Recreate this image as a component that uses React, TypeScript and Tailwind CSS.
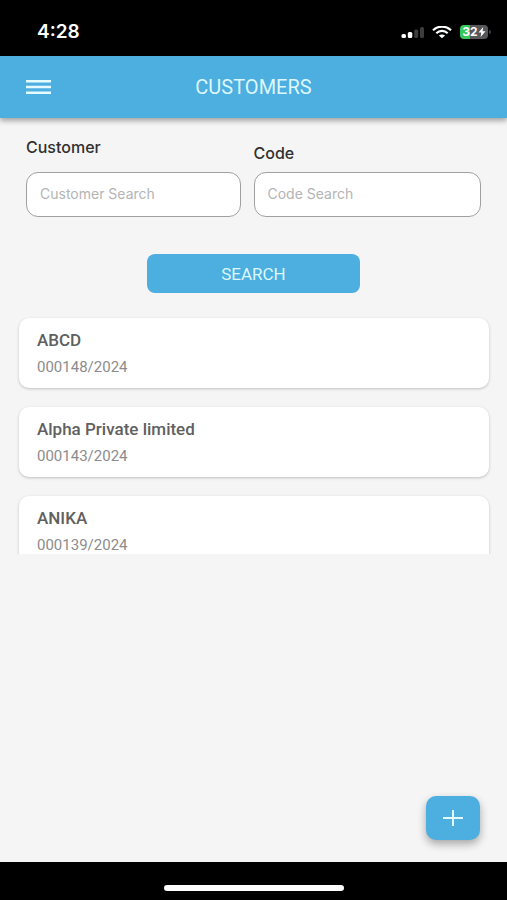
import React from "react";

type Customer = { name: string; code: string };

const customers: Customer[] = [
  { name: "ABCD", code: "000148/2024" },
  { name: "Alpha Private limited", code: "000143/2024" },
  { name: "ANIKA", code: "000139/2024" },
];

function StatusBar() {
  return (
    <div className="flex h-14 shrink-0 items-center justify-between bg-black pt-2 pr-4 pl-[37px] text-white">
      <span className="font-[Inter,sans-serif] text-[19px] leading-6 font-semibold">4:28</span>
      <div className="flex items-center gap-2">
        <svg width="24" height="13" viewBox="0 0 24 13" aria-hidden="true">
          <rect x="1.5" y="8" width="4.500" height="4" rx="1.500" fill="#fff" />
          <rect x="7.800" y="6" width="4.500" height="6" rx="1.500" fill="#fff" />
          <rect x="14.200" y="3.500" width="4" height="8.500" rx="1.500" fill="#3c3c3e" />
          <rect x="20" y="1" width="4" height="11" rx="1.500" fill="#3c3c3e" />
        </svg>
        <svg width="20" height="13" viewBox="0 0 20 13" fill="none" stroke="#fff" strokeWidth="2.200" aria-hidden="true">
          <path d="M1 4.300C6-.6 14-.6 19 4.300" />
          <path d="M4.300 7.200c3.300-3 8.100-3 11.400 0" />
          <path d="M10 12.200 6.900 9.600c1.800-1.500 4.400-1.500 6.200 0Z" fill="#fff" stroke="none" />
        </svg>
        <div className="flex items-center gap-px">
          <div className="flex h-[14px] w-[28px] items-center justify-center rounded-[4px] bg-[linear-gradient(90deg,#34c759_34%,#58585a_34%)]">
            <span className="font-[Inter,sans-serif] text-[12px] leading-[14px] font-bold">32</span>
            <svg width="8" height="10" viewBox="0 0 8 10" fill="#fff" aria-hidden="true">
              <path d="M5.200 0 .5 5.600h2.800L2.600 10l4.900-5.700H4.600Z" />
            </svg>
          </div>
          <div className="h-1 w-0.5 rounded-r-full bg-[#3c3c3e]" />
        </div>
      </div>
    </div>
  );
}

function Header() {
  return (
    <header className="z-10 grid h-[62px] shrink-0 grid-cols-[1fr_auto_1fr] items-center bg-[#4daee0] px-[26px] shadow-[0_3px_5px_rgba(0,0,0,0.32)]">
      <button type="button" aria-label="Open menu" className="w-[25px] text-[#e6fbff]">
        <svg width="25" height="14" viewBox="0 0 25 14" fill="currentColor" aria-hidden="true">
          <path d="M0 0h25v2.500H0zM0 5.750h25v2.500H0zM0 11.500h25v2.500H0z" />
        </svg>
      </button>
      <h1 className="text-[20px] leading-6 text-[#dcf8ff]">CUSTOMERS</h1>
    </header>
  );
}

const fieldLabel = "font-[Inter,sans-serif] text-[16px] leading-5 font-medium text-[#303030]";
const fieldInput =
  "h-[45px] w-full rounded-xl border border-[#a0a0a0] bg-white px-[13px] pb-[3px] font-[Inter,sans-serif] text-[14px] text-[#303030] outline-none placeholder:text-[#b4b4b4]";

function SearchForm() {
  return (
    <form className="px-[26px] pt-[19px]" onSubmit={(e) => e.preventDefault()}>
      <div className="grid grid-cols-[215fr_228fr] gap-[13px]">
        <div className="flex flex-col justify-between gap-[15px]">
          <label htmlFor="customer" className={fieldLabel}>Customer</label>
          <input id="customer" type="text" placeholder="Customer Search" className={fieldInput} />
        </div>
        <div className="flex flex-col justify-end gap-[9px]">
          <label htmlFor="code" className={fieldLabel}>Code</label>
          <input id="code" type="text" placeholder="Code Search" className={fieldInput} />
        </div>
      </div>
      <button
        type="submit"
        className="mx-auto mt-[37px] block h-[39px] w-[47%] rounded-lg bg-[#4daee0] text-[17px] leading-5 text-[#dcf8ff]"
      >
        SEARCH
      </button>
    </form>
  );
}

function CustomerCard({ name, code }: Customer) {
  return (
    <li className="shrink-0 rounded-[10px] bg-white px-[18px] py-3 shadow-[0_1px_3px_rgba(0,0,0,0.22)]">
      <p className="text-[17px] leading-5 font-medium text-[#606060]">{name}</p>
      <p className="mt-2 text-[15px] leading-[18px] text-[#8c8c8c]">{code}</p>
    </li>
  );
}

export default function App() {
  return (
    <div className="flex min-h-screen flex-col bg-[#f5f5f5] font-[Roboto,sans-serif]">
      <StatusBar />
      <Header />
      <main className="flex flex-1 flex-col">
        <SearchForm />
        <ul className="mt-[21px] flex h-[240px] flex-col gap-[19px] overflow-hidden pt-1 pr-[18px] pl-[19px]">
          {customers.map((c) => (
            <CustomerCard key={c.code} {...c} />
          ))}
        </ul>
        <button
          type="button"
          aria-label="Add customer"
          className="mt-auto mr-[27px] mb-[22px] flex h-11 w-[54px] items-center justify-center self-end rounded-[10px] bg-[#4daee0] shadow-[0_4px_8px_rgba(0,0,0,0.32)]"
        >
          <svg width="20" height="16" viewBox="0 0 20 16" stroke="#e6fbff" strokeWidth="2" aria-hidden="true">
            <path d="M0 8h20M10 0v16" />
          </svg>
        </button>
      </main>
      <footer className="flex h-[38px] shrink-0 items-end justify-center bg-black pb-[9px]">
        <div className="h-[6px] w-[180px] rounded-full bg-white" />
      </footer>
    </div>
  );
}
